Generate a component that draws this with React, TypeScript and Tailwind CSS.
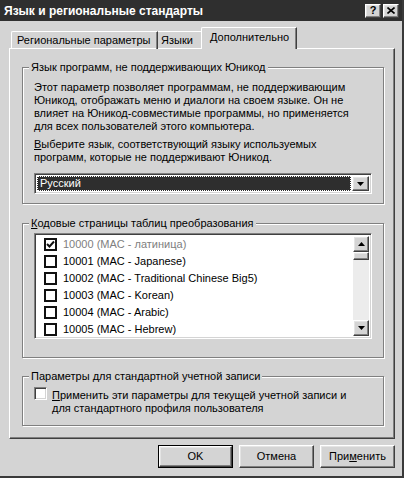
import React from "react";

const raised =
  "border border-t-white border-l-white border-r-[#404040] border-b-[#404040] shadow-[inset_-1px_-1px_0_#808080,inset_1px_1px_0_#e4e4e4]";
const sunken =
  "border border-t-[#808080] border-l-[#808080] border-r-white border-b-white shadow-[inset_1px_1px_0_#404040,inset_-1px_-1px_0_#d4d4d4]";
const fieldset =
  "m-0 min-w-0 border border-[#808080] shadow-[inset_1px_1px_0_#fff,1px_1px_0_#fff]";

function DownArrow() {
  return (
    <svg width="7" height="4" viewBox="0 0 7 4">
      <path d="M0 0h7L3.5 4z" fill="#000" />
    </svg>
  );
}
function UpArrow() {
  return (
    <svg width="7" height="4" viewBox="0 0 7 4">
      <path d="M0 4h7L3.5 0z" fill="#000" />
    </svg>
  );
}

function ListCheck({ checked }: { checked?: boolean }) {
  return (
    <div className="w-[13px] h-[13px] border-2 border-[#111] bg-white flex items-center justify-center shrink-0">
      {checked && (
        <svg width="9" height="9" viewBox="0 0 9 9">
          <path d="M1 4l2.5 2.5L8 1.5" stroke="#111" strokeWidth="2" fill="none" />
        </svg>
      )}
    </div>
  );
}

const items = [
  { t: "10000 (MAC - латиница)", c: true },
  { t: "10001 (MAC - Japanese)" },
  { t: "10002 (MAC - Traditional Chinese Big5)" },
  { t: "10003 (MAC - Korean)" },
  { t: "10004 (MAC - Arabic)" },
  { t: "10005 (MAC - Hebrew)" },
];

export default function App() {
  return (
    <div className="w-[404px] h-[478px] bg-[#d4d4d4] flex flex-col border-r-2 border-b-2 border-r-[#3a3a3a] border-b-[#3a3a3a] text-[11px] text-black font-['Liberation_Sans',Arial,sans-serif] overflow-hidden">
      {/* title bar */}
      <div className="h-[21px] bg-[#2f2f2f] flex items-center pl-[4px] pr-[3px] shrink-0">
        <div className="text-white font-bold text-[12px] leading-none flex-1 whitespace-nowrap">
          Язык и региональные стандарты
        </div>
        <div className="flex gap-[2px]">
          <div className={`w-[16px] h-[14px] bg-[#d4d4d4] ${raised} flex items-center justify-center font-bold text-[11px] leading-none`}>
            ?
          </div>
          <div className={`w-[16px] h-[14px] bg-[#d4d4d4] ${raised} flex items-center justify-center`}>
            <svg width="8" height="7" viewBox="0 0 8 7">
              <path d="M0.5 0.5l7 6M7.5 0.5l-7 6" stroke="#000" strokeWidth="1.6" />
            </svg>
          </div>
        </div>
      </div>

      {/* body */}
      <div className="flex flex-col pl-[9px] pr-[7px] pt-[6px]">
        {/* tabs */}
        <div className="flex items-end pl-[2px] h-[22px] -mb-[1px] relative z-10">
          <div className="w-[147px] h-[18px] border-l border-t border-white border-r border-r-[#404040] shadow-[inset_-1px_0_0_#808080] rounded-tl-[2px] pl-[5px] pt-[2px] leading-[13px] whitespace-nowrap">
            Региональные параметры
          </div>
          <div className="w-[45px] h-[18px] border-t border-white border-r border-r-[#404040] shadow-[inset_-1px_0_0_#808080] pl-[3px] pt-[2px] leading-[13px] whitespace-nowrap">
            Языки
          </div>
          <div className="-ml-[2px] w-[96px] h-[22px] bg-[#d4d4d4] border-l border-t border-white border-r border-r-[#404040] shadow-[inset_-1px_0_0_#808080] rounded-tl-[2px] pl-[8px] pt-[3px] leading-[13px] whitespace-nowrap">
            Дополнительно
          </div>
        </div>

        {/* panel */}
        <div className="h-[391px] border border-t-white border-l-white border-r-[#404040] border-b-[#404040] shadow-[inset_-1px_-1px_0_#808080] pl-[12px] pr-[10px] pt-[12px] flex flex-col">
          {/* group 1 */}
          <fieldset className={`${fieldset} px-[11px] pt-[7px] pb-[9px]`}>
            <legend className="-ml-[5px] px-[2px] leading-[13px] bg-[#d4d4d4]">
              Язык программ, не поддерживающих Юникод
            </legend>
            <p className="leading-[13px] whitespace-nowrap">
              Этот параметр позволяет программам, не поддерживающим
              <br />
              Юникод, отображать меню и диалоги на своем языке. Он не
              <br />
              влияет на Юникод-совместимые программы, но применяется
              <br />
              для всех пользователей этого компьютера.
            </p>
            <p className="leading-[13px] whitespace-nowrap mt-[5px]">
              <u>В</u>ыберите язык, соответствующий языку используемых
              <br />
              программ, которые не поддерживают Юникод.
            </p>
            <div className={`mt-[9px] h-[21px] bg-white ${sunken} flex p-[2px]`}>
              <div className="flex-1 bg-[#2e2e2e] border border-dotted border-white text-white leading-[13px] pl-[2px] mr-[1px]">
                Русский
              </div>
              <div className={`w-[17px] bg-[#d4d4d4] ${raised} flex items-center justify-center`}>
                <DownArrow />
              </div>
            </div>
          </fieldset>

          {/* group 2 */}
          <fieldset className={`${fieldset} mt-[13px] px-[11px] pt-[3px] pb-[18px]`}>
            <legend className="-ml-[5px] px-[2px] leading-[13px] bg-[#d4d4d4]">
              <u>К</u>одовые страницы таблиц преобразования
            </legend>
            <div className={`h-[106px] bg-white ${sunken} p-[2px] flex`}>
              <div className="flex-1 flex flex-col pl-[7px]">
                {items.map((it) => (
                  <div key={it.t} className="h-[17px] flex items-center shrink-0">
                    <ListCheck checked={it.c} />
                    <span className={`ml-[6px] whitespace-nowrap leading-[13px] ${it.c ? "text-[#808080]" : ""}`}>
                      {it.t}
                    </span>
                  </div>
                ))}
              </div>
              <div className="w-[16px] bg-[#ececec] flex flex-col">
                <div className={`h-[16px] bg-[#d4d4d4] ${raised} flex items-center justify-center`}>
                  <UpArrow />
                </div>
                <div className={`h-[8px] bg-[#d4d4d4] ${raised}`} />
                <div className="flex-1" />
                <div className={`h-[16px] bg-[#d4d4d4] ${raised} flex items-center justify-center`}>
                  <DownArrow />
                </div>
              </div>
            </div>
          </fieldset>

          {/* group 3 */}
          <fieldset className={`${fieldset} mt-[12px] px-[11px] pt-[3px] pb-[10px]`}>
            <legend className="-ml-[5px] px-[2px] leading-[13px] bg-[#d4d4d4]">
              Параметры для стандартной учетной записи
            </legend>
            <div className="flex items-start">
              <div className={`w-[13px] h-[13px] bg-white ${sunken} shrink-0 mt-[1px]`} />
              <div className="ml-[5px] leading-[13px] whitespace-nowrap pt-[3px]">
                <u>П</u>рименить эти параметры для текущей учетной записи и
                <br />
                для стандартного профиля пользователя
              </div>
            </div>
          </fieldset>
        </div>

        {/* buttons */}
        <div className="flex justify-end gap-[6px] mt-[6px]">
          <div className="w-[75px] h-[23px] border border-black">
            <div className={`w-full h-full ${raised} flex items-center justify-center leading-none`}>OK</div>
          </div>
          <div className={`w-[75px] h-[23px] ${raised} flex items-center justify-center leading-none`}>Отмена</div>
          <div className={`w-[75px] h-[23px] ${raised} flex items-center justify-center leading-none`}>
            При<u>м</u>енить
          </div>
        </div>
      </div>
    </div>
  );
}
